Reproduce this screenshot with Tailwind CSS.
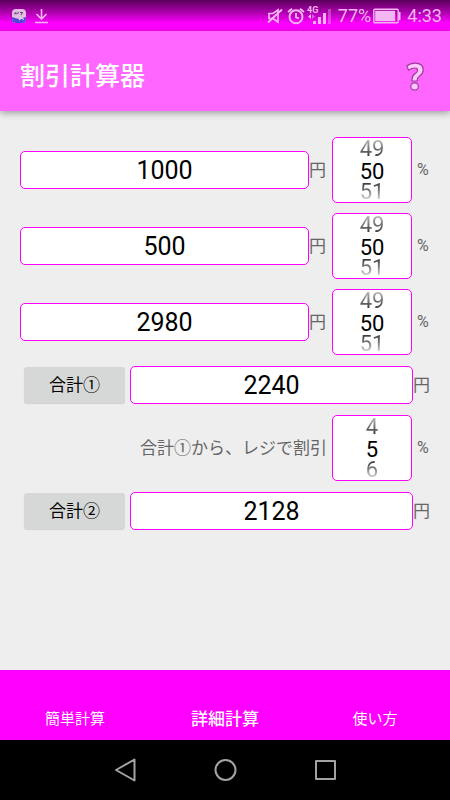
<!DOCTYPE html>
<html lang="ja">
<head>
<meta charset="utf-8">
<meta name="viewport" content="width=device-width, initial-scale=1">
<title>割引計算器</title>
<script src="https://cdn.jsdelivr.net/npm/@tailwindcss/browser@4"></script>
</head>
<body class="min-h-screen flex flex-col bg-[#eeeeee] font-['Roboto','Noto_Sans_CJK_JP',sans-serif] text-[#666666]">

<!-- Status bar -->
<div class="h-[31px] shrink-0 flex items-center pl-[11px] pr-2 bg-linear-to-b from-[#5a005a] to-[#ff00ff] to-75% text-[#f3b6f3]">
  <svg class="w-4 h-4" viewBox="0 0 16 16" aria-hidden="true">
    <rect x="1" y="1" width="14" height="14" rx="4" fill="#e3bce0"/>
    <path d="M1 9 L4 10 L8 11 L15 9 V11 Q15 15 11 15 H5 Q1 15 1 11Z" fill="#5148d8"/>
    <path d="M3 6 L5 4.5 V6.5 M6.5 6 L7.5 4 M9 4.5 H11.5 L10 7" stroke="#5d3b7a" stroke-width="1" fill="none"/>
    <path d="M8 12 L10 10 L13 11.5" stroke="#e8d5f5" stroke-width="1.1" fill="none"/>
  </svg>
  <svg class="w-4 h-4 ml-[7px]" viewBox="0 0 16 16" fill="none" stroke="currentColor" stroke-width="1.6" aria-hidden="true">
    <path d="M7.5 1 V11 M2.5 6 L7.5 11 L12.5 6 M1 14.5 H14"/>
  </svg>
  <div class="ml-auto flex items-center">
    <svg class="w-4 h-4" viewBox="0 0 16 16" fill="none" stroke="currentColor" stroke-width="1.7" aria-hidden="true">
      <path d="M2 5.5 H6 L11 2 V14 L6 10.5 H2Z"/><path d="M1 14.5 L15 1.5" stroke-width="1.8"/>
    </svg>
    <svg class="w-[18px] h-[18px] ml-[4px]" viewBox="0 0 18 18" fill="none" stroke="currentColor" stroke-width="1.9" aria-hidden="true">
      <circle cx="9" cy="9.8" r="6.5"/><path d="M9 6 V10.3 L12 11.3 M1 5 L5 1.7 M17 5 L13 1.7"/>
    </svg>
    <svg class="w-[27px] h-6 ml-[2px]" viewBox="0 0 27 24" fill="currentColor" aria-hidden="true">
      <text x="0" y="9" font-size="9" font-weight="700" font-family="Roboto, sans-serif">4G</text>
      <path d="M1 12.5 L4 10 V15Z"/><path d="M8 12.5 L5 10 V15Z" opacity=".5"/>
      <rect x="6" y="17" width="3" height="3"/><rect x="11" y="13" width="3" height="7"/><rect x="16" y="9" width="3" height="11"/>
      <rect x="21" y="5" width="3" height="15" opacity=".35"/>
    </svg>
    <span class="ml-[4px] text-lg">77%</span>
    <svg class="w-7 h-4 ml-[2px]" viewBox="0 0 28 16" aria-hidden="true">
      <rect x=".8" y="1.3" width="24.4" height="13.4" rx="1" fill="none" stroke="currentColor" stroke-width="1.4"/>
      <rect x="2.2" y="2.8" width="20" height="10.4" fill="currentColor"/>
      <path d="M26 4 H27.5 V12 H26Z" fill="currentColor"/>
    </svg>
    <span class="ml-[6px] text-lg">4:33</span>
  </div>
</div>

<!-- App bar -->
<header class="h-20 shrink-0 flex items-center justify-between pl-5 pr-[21px] pt-3 bg-[#ff66ff] shadow-[0_2px_7px_rgba(0,0,0,0.35)]">
  <h1 class="text-[25px] leading-8 font-medium text-white">割引計算器</h1>
  <button type="button" aria-label="ヘルプ">
    <svg class="w-7 h-8" viewBox="0 0 28 32" fill="#ffc8ff" stroke="#9c3d9c" stroke-width="1.2" stroke-linejoin="round" aria-hidden="true">
      <path d="M5.8 5 Q9 2.2 14 2.2 Q22.2 2.2 22.2 9 Q22.2 12.5 18.5 15.3 Q16.3 17 16.3 18.5 V20 H11 V18 Q11 15 14.2 12.6 Q16.6 10.8 16.6 9.2 Q16.6 7 13.7 7 Q10.8 7 7.6 9.2Z"/>
      <ellipse cx="13.6" cy="25.4" rx="3.8" ry="3.6"/>
    </svg>
  </button>
</header>

<main class="grow flex flex-col gap-[11px] px-5 pt-[26px] pb-5">
  <div class="flex flex-col gap-[10px]">
    <div class="flex items-center">
      <input id="price1" aria-label="金額1" inputmode="numeric" value="1000" class="grow min-w-0 h-[38px] rounded-[5px] border border-[#ff00ff] bg-white text-center text-[25px] text-black">
      <label for="price1" class="w-[18px] shrink-0 text-[17px] leading-6">円</label>
      <div class="ml-[5px] w-20 h-[66px] shrink-0 flex flex-col items-center overflow-hidden rounded-[5px] border border-[#ff00ff] bg-white text-[22px] leading-[22px]">
        <button type="button" aria-label="減らす" class="h-[22px] w-full shrink-0 bg-linear-to-b from-[#cccccc] to-[#222222] bg-clip-text text-transparent">49</button>
        <input id="rate1" aria-label="割引率1" inputmode="numeric" value="50" class="h-[22px] w-full shrink-0 text-center text-black">
        <button type="button" aria-label="増やす" class="h-5 leading-5 w-full shrink-0 bg-linear-to-b from-[#333333] to-[#eeeeee] bg-clip-text text-transparent">51</button>
      </div>
      <label for="rate1" class="ml-[5px] w-[13px] shrink-0 text-base leading-6">%</label>
    </div>
    <div class="flex items-center">
      <input id="price2" aria-label="金額2" inputmode="numeric" value="500" class="grow min-w-0 h-[38px] rounded-[5px] border border-[#ff00ff] bg-white text-center text-[25px] text-black">
      <label for="price2" class="w-[18px] shrink-0 text-[17px] leading-6">円</label>
      <div class="ml-[5px] w-20 h-[66px] shrink-0 flex flex-col items-center overflow-hidden rounded-[5px] border border-[#ff00ff] bg-white text-[22px] leading-[22px]">
        <button type="button" aria-label="減らす" class="h-[22px] w-full shrink-0 bg-linear-to-b from-[#cccccc] to-[#222222] bg-clip-text text-transparent">49</button>
        <input id="rate2" aria-label="割引率2" inputmode="numeric" value="50" class="h-[22px] w-full shrink-0 text-center text-black">
        <button type="button" aria-label="増やす" class="h-5 leading-5 w-full shrink-0 bg-linear-to-b from-[#333333] to-[#eeeeee] bg-clip-text text-transparent">51</button>
      </div>
      <label for="rate2" class="ml-[5px] w-[13px] shrink-0 text-base leading-6">%</label>
    </div>
    <div class="flex items-center">
      <input id="price3" aria-label="金額3" inputmode="numeric" value="2980" class="grow min-w-0 h-[38px] rounded-[5px] border border-[#ff00ff] bg-white text-center text-[25px] text-black">
      <label for="price3" class="w-[18px] shrink-0 text-[17px] leading-6">円</label>
      <div class="ml-[5px] w-20 h-[66px] shrink-0 flex flex-col items-center overflow-hidden rounded-[5px] border border-[#ff00ff] bg-white text-[22px] leading-[22px]">
        <button type="button" aria-label="減らす" class="h-[22px] w-full shrink-0 bg-linear-to-b from-[#cccccc] to-[#222222] bg-clip-text text-transparent">49</button>
        <input id="rate3" aria-label="割引率3" inputmode="numeric" value="50" class="h-[22px] w-full shrink-0 text-center text-black">
        <button type="button" aria-label="増やす" class="h-5 leading-5 w-full shrink-0 bg-linear-to-b from-[#333333] to-[#eeeeee] bg-clip-text text-transparent">51</button>
      </div>
      <label for="rate3" class="ml-[5px] w-[13px] shrink-0 text-base leading-6">%</label>
    </div>
  </div>

  <div class="flex flex-col gap-[11px]">
    <div class="flex items-center pl-1">
      <button type="button" class="w-[101px] h-9 shrink-0 rounded-[3px] bg-[#d6d8d7] text-[17px] leading-6 text-black shadow-[0_1px_1px_rgba(0,0,0,0.12)]">合計①</button>
      <input id="total1" aria-label="合計①" inputmode="numeric" value="2240" class="ml-[5px] grow min-w-0 h-[38px] rounded-[5px] border border-[#ff00ff] bg-white text-center text-[25px] text-black">
      <label for="total1" class="w-[17px] shrink-0 text-[17px] leading-6">円</label>
    </div>
    <div class="flex items-center justify-end">
      <label for="rate4" class="text-[17px] leading-6">合計①から、レジで割引</label>
      <div class="ml-[5px] w-20 h-[66px] shrink-0 flex flex-col items-center overflow-hidden rounded-[5px] border border-[#ff00ff] bg-white text-[22px] leading-[22px]">
        <button type="button" aria-label="減らす" class="h-[22px] w-full shrink-0 bg-linear-to-b from-[#cccccc] to-[#222222] bg-clip-text text-transparent">4</button>
        <input id="rate4" inputmode="numeric" value="5" class="h-[22px] w-full shrink-0 text-center text-black">
        <button type="button" aria-label="増やす" class="h-5 leading-5 w-full shrink-0 bg-linear-to-b from-[#333333] to-[#eeeeee] bg-clip-text text-transparent">6</button>
      </div>
      <label for="rate4" class="ml-[5px] w-[13px] shrink-0 text-base leading-6">%</label>
    </div>
    <div class="flex items-center pl-1">
      <button type="button" class="w-[101px] h-9 shrink-0 rounded-[3px] bg-[#d6d8d7] text-[17px] leading-6 text-black shadow-[0_1px_1px_rgba(0,0,0,0.12)]">合計②</button>
      <input id="total2" aria-label="合計②" inputmode="numeric" value="2128" class="ml-[5px] grow min-w-0 h-[38px] rounded-[5px] border border-[#ff00ff] bg-white text-center text-[25px] text-black">
      <label for="total2" class="w-[17px] shrink-0 text-[17px] leading-6">円</label>
    </div>
  </div>
</main>

<!-- Bottom tabs -->
<nav class="h-[70px] shrink-0 grid grid-cols-3 items-end pb-[9px] bg-[#ff00ff] text-center text-[15px] leading-6 text-white">
  <a href="#simple">簡単計算</a>
  <a href="#detail" aria-current="page" class="text-[17px] font-medium">詳細計算</a>
  <a href="#help">使い方</a>
</nav>

<!-- System navigation -->
<div class="h-[60px] shrink-0 flex items-center justify-center gap-[76px] bg-black text-[#a3a3a3]">
  <button type="button" aria-label="戻る">
    <svg class="w-6 h-6" viewBox="0 0 24 24" fill="none" stroke="currentColor" stroke-width="2" stroke-linejoin="round" aria-hidden="true"><path d="M21.5 1.5 V22.5 L3 12Z"/></svg>
  </button>
  <button type="button" aria-label="ホーム">
    <svg class="w-6 h-6" viewBox="0 0 24 24" fill="none" stroke="currentColor" stroke-width="2" aria-hidden="true"><circle cx="12.5" cy="12" r="10"/></svg>
  </button>
  <button type="button" aria-label="履歴">
    <svg class="w-6 h-6" viewBox="0 0 24 24" fill="none" stroke="currentColor" stroke-width="2" stroke-linejoin="round" aria-hidden="true"><rect x="3" y="3" width="19" height="18"/></svg>
  </button>
</div>
</body>
</html>
